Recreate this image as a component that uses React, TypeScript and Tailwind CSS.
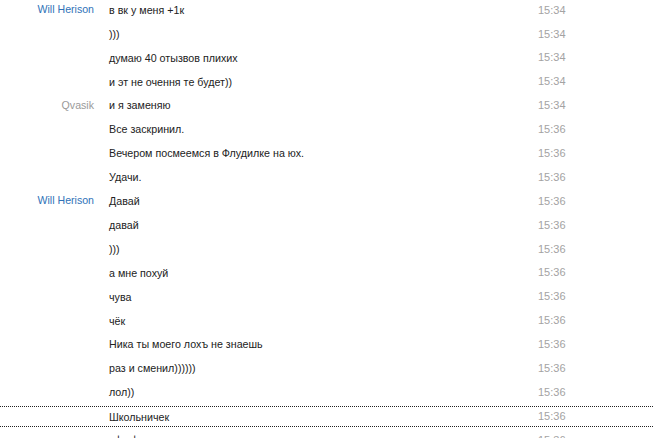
const messages: { name?: string; kind?: 'blue' | 'gray'; text: string; time: string; marked?: boolean }[] = [
  { name: 'Will Herison', kind: 'blue', text: 'в вк у меня +1к', time: '15:34' },
  { text: ')))', time: '15:34' },
  { text: 'думаю 40 отызвов плихих', time: '15:34' },
  { text: 'и эт не очення те будет))', time: '15:34' },
  { name: 'Qvasik', kind: 'gray', text: 'и я заменяю', time: '15:34' },
  { text: 'Все заскринил.', time: '15:36' },
  { text: 'Вечером посмеемся в Флудилке на юх.', time: '15:36' },
  { text: 'Удачи.', time: '15:36' },
  { name: 'Will Herison', kind: 'blue', text: 'Давай', time: '15:36' },
  { text: 'давай', time: '15:36' },
  { text: ')))', time: '15:36' },
  { text: 'а мне похуй', time: '15:36' },
  { text: 'чува', time: '15:36' },
  { text: 'чёк', time: '15:36' },
  { text: 'Ника ты моего лохъ не знаешь', time: '15:36' },
  { text: 'раз и сменил))))))', time: '15:36' },
  { text: 'лол))', time: '15:36' },
  { text: 'Школьничек', time: '15:36', marked: true },
  { text: 'тфыфы', time: '15:36' },
]

export default function App() {
  return (
    <div className="w-[653px] h-[438px] overflow-hidden bg-white font-['Liberation_Sans',Arial,sans-serif] text-[11px]">
      <div className="-mt-[2px]">
        {messages.map((m, i) => (
          <div
            key={i}
            className={`flex items-center ${
              m.marked ? 'border-y border-dotted border-[#222] h-[21px] mt-[2px] mb-[1px]' : 'h-[23.9px]'
            }`}
          >
            <div
              className={`w-[94px] text-right shrink-0 text-[10.6px] ${
                m.kind === 'blue' ? 'text-[#2f72b8]' : 'text-[#9a9a9a]'
              }`}
            >
              {m.name}
            </div>
            <div className="flex-1 pl-[15px] text-[10.7px] text-[#222]">{m.text}</div>
            <div className="w-[115px] shrink-0 text-[#a3a3a3]">{m.time}</div>
          </div>
        ))}
      </div>
    </div>
  )
}
